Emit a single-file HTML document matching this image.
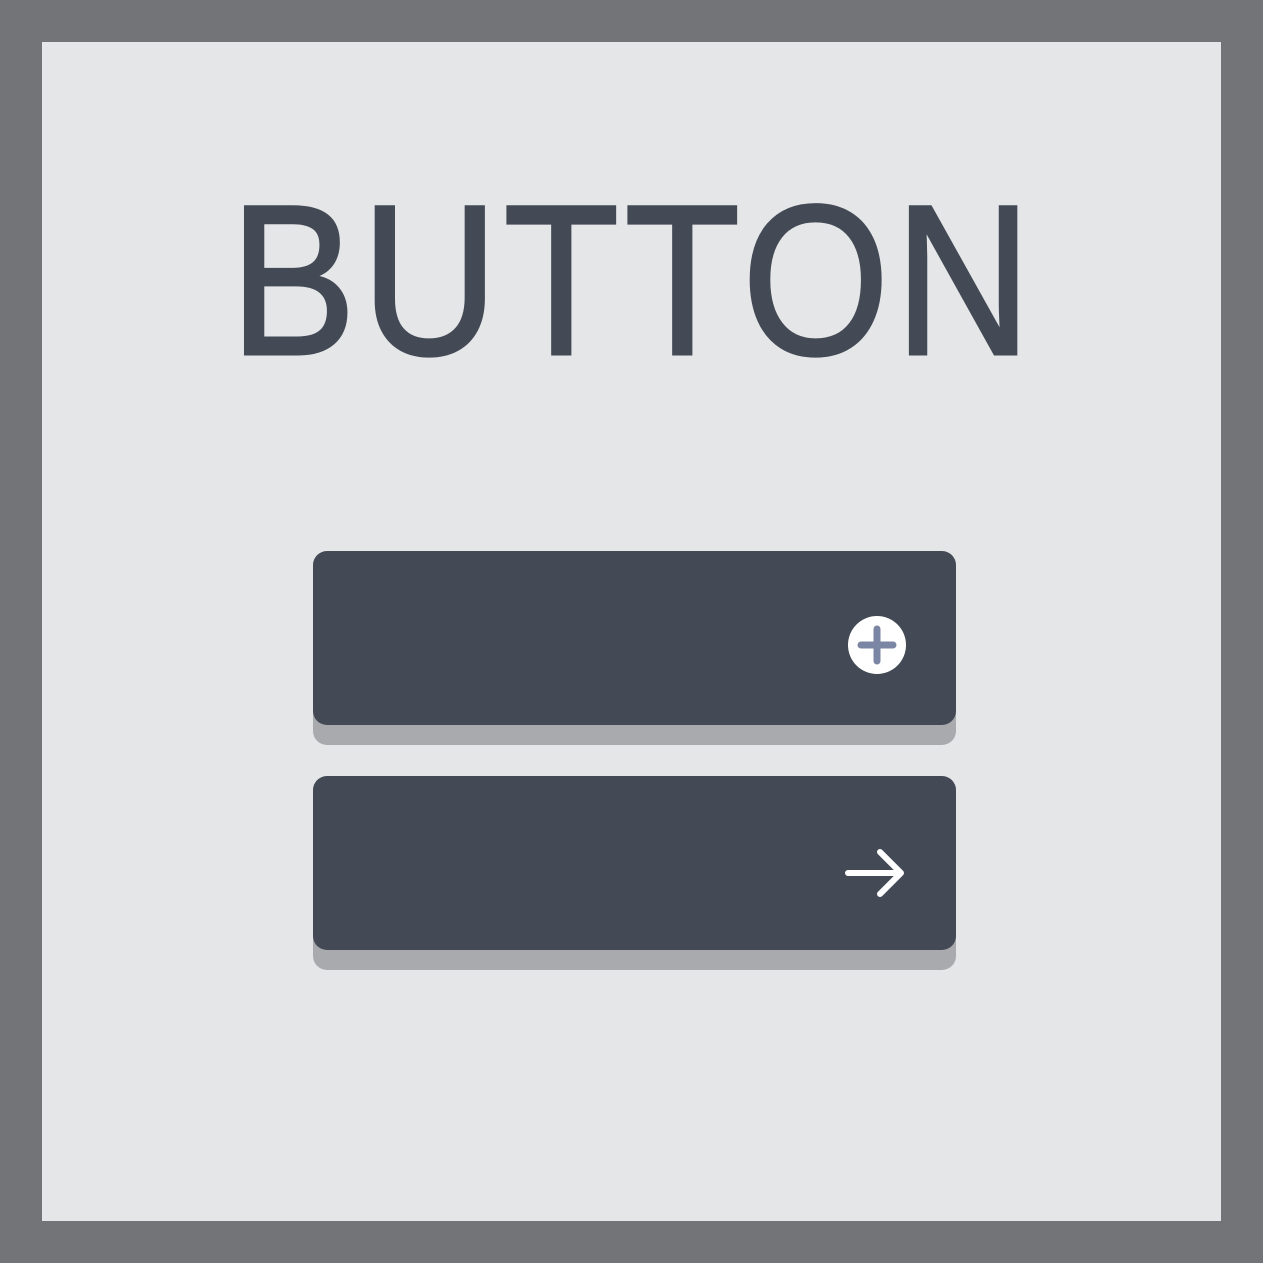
<!DOCTYPE html>
<html><head><style>
html,body{margin:0;padding:0}
body{width:1263px;height:1263px;background:#737478;position:relative;overflow:hidden}
.in{position:absolute;left:42px;top:42px;width:1179px;height:1179px;background:#e5e6e8}
.t{position:absolute;left:0;top:161px;width:1263px;text-align:center;font-family:"Liberation Sans",sans-serif;font-size:214px;line-height:240px;color:#434a55;transform:scaleX(0.885);letter-spacing:6px;-webkit-text-stroke:3px #434a55;padding-left:4px;box-sizing:border-box}
.b{position:absolute;left:313px;width:643px;height:174px;background:#434a55;border-radius:14px;box-shadow:0 20px 0 #a9aaae}
svg{position:absolute;left:0;top:0}
</style></head><body>
<div class="in"></div>
<div class="t">BUTTON</div>
<div class="b" style="top:551px"></div>
<div class="b" style="top:776px"></div>
<svg width="1263" height="1263">
<circle cx="877" cy="645" r="29" fill="#fff"/>
<path d="M861 645H893M877 629V661" stroke="#7a86a4" stroke-width="7" stroke-linecap="round"/>
<path d="M848 873H901M880 852L901 873L880 894" stroke="#fff" stroke-width="6" fill="none" stroke-linecap="round" stroke-linejoin="round"/>
</svg>
</body></html>
